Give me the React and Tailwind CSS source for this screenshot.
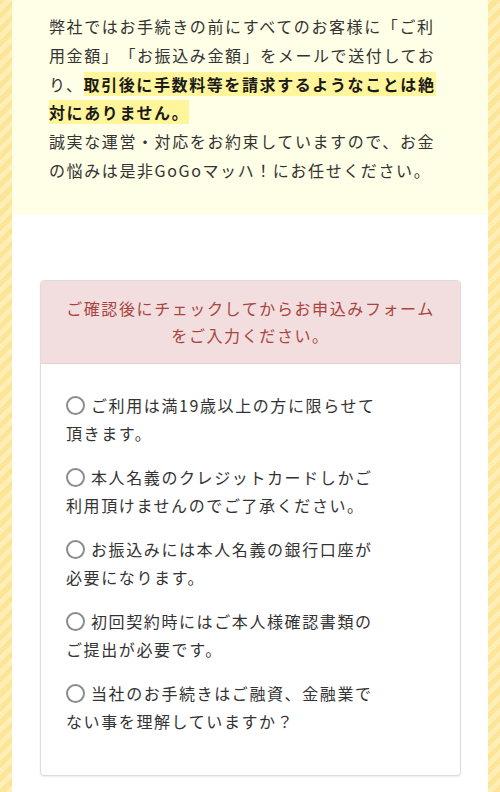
import React from "react";

const items = [
  ["ご利用は満19歳以上の方に限らせて", "頂きます。"],
  ["本人名義のクレジットカードしかご", "利用頂けませんのでご了承ください。"],
  ["お振込みには本人名義の銀行口座が", "必要になります。"],
  ["初回契約時にはご本人様確認書類の", "ご提出が必要です。"],
  ["当社のお手続きはご融資、金融業で", "ない事を理解していますか？"],
];

const App = () => {
  return (
    <div
      className="h-[792px] overflow-hidden px-[12px] [text-spacing-trim:space-all] bg-[repeating-linear-gradient(-45deg,#fde597_0px,#fde597_5px,#ffeeb5_5px,#ffeeb5_10px)]"
      style={{ fontFamily: '"Noto Sans CJK JP", "Noto Sans", sans-serif' }}
    >
      {/* intro */}
      <div className="bg-[#fffee6] pl-[37px] pr-[30px] pt-[12px] pb-[30px] text-[16px] leading-[28.8px] tracking-[0.1em] text-[#333333]">
        <p>
          弊社ではお手続きの前にすべてのお客様に「ご利
          <br />
          用金額」「お振込み金額」をメールで送付してお
          <br />
          り、
          <strong className="font-bold text-[#1a1a1a] bg-[#fff59a]">
            取引後に手数料等を請求するようなことは絶
            <br />
            対にありません。
          </strong>
          <br />
          誠実な運営・対応をお約束していますので、お金
          <br />
          の悩みは是非GoGoマッハ！にお任せください。
        </p>
      </div>

      {/* checklist */}
      <div className="bg-white h-full pl-[28px] pr-[27px] pt-[65px]">
        <div className="rounded-[4px] border border-[#dcdcdc] bg-white shadow-[0_1px_2px_rgba(0,0,0,0.08)] overflow-hidden">
          <div className="bg-[#f2dede] border-b border-[#e8cdd2] text-[#a94442] text-center text-[16px] leading-[27px] tracking-[0.1em] pt-[14px] pb-[14px]">
            ご確認後にチェックしてからお申込みフォーム
            <br />
            をご入力ください。
          </div>
          <div className="pl-[25px] pr-[20px] pt-[27px] pb-[24px] text-[16px] leading-[28px] tracking-[0.1em] text-[#333333]">
            {items.map(([a, b], i) => (
              <p key={i} className="mb-[16px]">
                <span className="inline-block align-[-3px] w-[19px] h-[19px] rounded-full border-2 border-[#8c8c8c] mr-[6px]" />
                {a}
                <br />
                {b}
              </p>
            ))}
          </div>
        </div>
      </div>
    </div>
  );
};

export default App;
